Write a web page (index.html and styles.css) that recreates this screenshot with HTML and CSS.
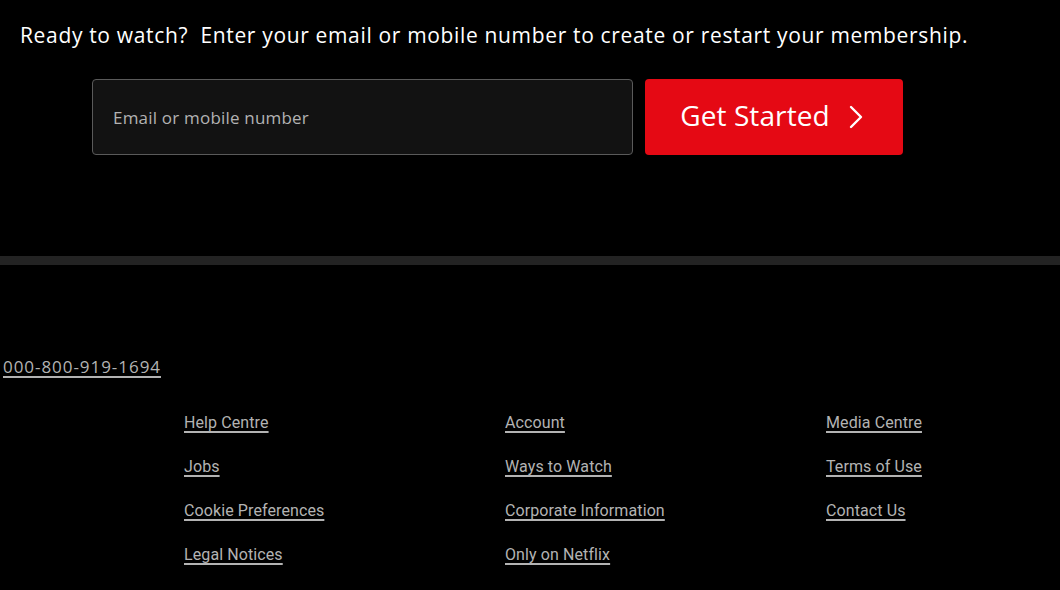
FILE: index.html
```html
<!DOCTYPE html>
<html lang="en">
<head>
<meta charset="utf-8">
<title>Netflix footer</title>
<link rel="stylesheet" href="styles.css">
</head>
<body>
<section class="cta">
  <h3 class="cta-title">Ready to watch?&nbsp; Enter your email or mobile number to create or restart your membership.</h3>
  <form class="cta-form">
    <div class="field"><span class="placeholder">Email or mobile number</span></div>
    <button type="button" class="btn-start">Get Started
      <svg class="chev" width="16" height="26" viewBox="0 0 16 26"><path d="M3 3 L13 13 L3 23" fill="none" stroke="#fff" stroke-width="2.4" stroke-linecap="round" stroke-linejoin="round"/></svg>
    </button>
  </form>
</section>
<div class="divider"></div>
<footer class="footer">
  <a class="phone" href="#">000-800-919-1694</a>
  <ul class="links">
    <li><a href="#">Help Centre</a></li>
    <li><a href="#">Account</a></li>
    <li><a href="#">Media Centre</a></li>
    <li><a href="#">Jobs</a></li>
    <li><a href="#">Ways to Watch</a></li>
    <li><a href="#">Terms of Use</a></li>
    <li><a href="#">Cookie Preferences</a></li>
    <li><a href="#">Corporate Information</a></li>
    <li><a href="#">Contact Us</a></li>
    <li><a href="#">Legal Notices</a></li>
    <li><a href="#">Only on Netflix</a></li>
  </ul>
</footer>
</body>
</html>
```
FILE: styles.css
```css
html, body {
  margin: 0;
  padding: 0;
  background: #000;
  color: #fff;
  font-family: "Roboto", "Liberation Sans", sans-serif;
  height: 590px;
  overflow: hidden;
}
.cta {
  padding: 21px 0 0 20px;
  height: 234px;
  box-sizing: border-box;
}
.cta-title {
  margin: 0;
  font-family: "Open Sans", "Liberation Sans", sans-serif;
  font-size: 21px;
  font-weight: 400;
  line-height: 28px;
  letter-spacing: 0.66px;
  white-space: nowrap;
}
.cta-form {
  display: flex;
  gap: 12px;
  margin: 30px 0 0 72px;
}
.field {
  width: 541px;
  height: 76px;
  box-sizing: border-box;
  border: 1px solid #5a5a5a;
  border-radius: 4px;
  background: #121212;
  display: flex;
  align-items: center;
  padding-left: 20px;
}
.placeholder {
  font-family: "Open Sans", "Liberation Sans", sans-serif;
  font-size: 17px;
  letter-spacing: 0.2px;
  color: #b3b3b3;
}
.btn-start {
  width: 258px;
  height: 76px;
  border: 0;
  border-radius: 4px;
  background: #e50914;
  color: #fff;
  font-family: "Open Sans", "Liberation Sans", sans-serif;
  font-size: 28px;
  font-weight: 400;
  letter-spacing: 0.1px;
  display: flex;
  align-items: center;
  justify-content: center;
  gap: 18px;
  padding: 0 4px 4px 0;
}
.chev { display: block; margin-top: 3px; }
.divider {
  height: 9px;
  background: #232323;
  margin-top: 22px;
}
.footer {
  padding: 92px 0 0 3px;
}
.phone {
  color: #b3b3b3;
  font-family: "Open Sans", "Liberation Sans", sans-serif;
  font-size: 17px;
  letter-spacing: 0.95px;
  line-height: 20px;
  text-decoration: underline;
  text-decoration-thickness: 1.5px;
  text-underline-offset: 3px;
}
.links {
  list-style: none;
  margin: 36px 0 0 181px;
  padding: 0;
  display: grid;
  grid-template-columns: 321px 321px 1fr;
  row-gap: 24px;
}
.links a {
  color: #b3b3b3;
  font-size: 16px;
  line-height: 20px;
  letter-spacing: 0.1px;
  text-decoration: underline;
  text-decoration-thickness: 1.5px;
  text-underline-offset: 3px;
}
```
